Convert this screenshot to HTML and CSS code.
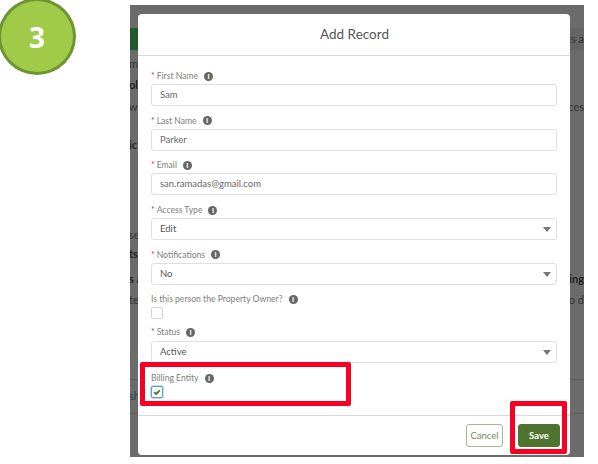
FILE: index.html
```html
<!DOCTYPE html>
<html lang="en">
<head>
<meta charset="utf-8">
<title>Add Record</title>
<link rel="stylesheet" href="styles.css">
</head>
<body>
<div class="badge">3</div>
<div class="backdrop">
  <div class="page">
    <div class="row banner"><span class="band"></span><span class="frag">ts a</span></div>
    <div class="row r-mu"><span class="frag lead">mu</span></div>
    <div class="row r-oll"><span class="frag lead bold">oll</span></div>
    <div class="row r-wh"><span class="frag lead">wh</span><span class="frag">cces</span></div>
    <div class="row r-ic"><span class="frag lead bold">ic</span></div>
    <div class="row r-se"><span class="frag lead">se</span></div>
    <div class="row r-ts"><span class="frag lead bold">ts</span></div>
    <div class="row r-sa"><span class="frag lead bold">s a</span><span class="frag bold">ing</span></div>
    <div class="row r-te"><span class="frag lead">te</span><span class="frag">o d</span></div>
    <div class="rule r-rule1"></div>
    <div class="row r-sh"><span class="frag lead link">sh</span></div>
    <div class="rule r-rule2"></div>
  </div>
  <section class="modal">
    <header class="modal-head">Add Record</header>
    <div class="modal-body">
      <div class="field">
        <div class="label"><span class="req">*</span>First Name<i class="info">i</i></div>
        <div class="input">Sam</div>
      </div>
      <div class="field">
        <div class="label"><span class="req">*</span>Last Name<i class="info">i</i></div>
        <div class="input">Parker</div>
      </div>
      <div class="field">
        <div class="label"><span class="req">*</span>Email<i class="info">i</i></div>
        <div class="input">san.ramadas@gmail.com</div>
      </div>
      <div class="field">
        <div class="label"><span class="req">*</span>Access Type<i class="info">i</i></div>
        <div class="input select">Edit<span class="caret"></span></div>
      </div>
      <div class="field">
        <div class="label"><span class="req">*</span>Notifications<i class="info">i</i></div>
        <div class="input select">No<span class="caret"></span></div>
      </div>
      <div class="field check-field">
        <div class="label">Is this person the Property Owner?<i class="info">i</i></div>
        <div class="checkbox"></div>
      </div>
      <div class="field status-field">
        <div class="label"><span class="req">*</span>Status<i class="info">i</i></div>
        <div class="input select">Active<span class="caret"></span></div>
      </div>
      <div class="field check-field billing-field">
        <div class="label">Billing Entity<i class="info">i</i></div>
        <div class="checkbox checked">
          <svg viewBox="0 0 10 10" width="10" height="10" aria-hidden="true"><path d="M2.2 5.2 L4.2 7 L7.8 3.4" fill="none" stroke="#4f7430" stroke-width="1.8"/></svg>
        </div>
      </div>
    </div>
    <footer class="modal-foot">
      <button class="btn cancel">Cancel</button>
      <button class="btn save">Save</button>
    </footer>
  </section>
</div>
<div class="callout callout-billing"></div>
<div class="callout callout-save"></div>
</body>
</html>
```
FILE: styles.css
```css
* { box-sizing: border-box; }
html, body { margin: 0; padding: 0; }
body {
  position: relative;
  width: 598px;
  height: 464px;
  overflow: hidden;
  background: #fff;
  font-family: "Lato", "Noto Sans", sans-serif;
}
.badge {
  position: absolute;
  left: -2px;
  top: -2px;
  width: 78px;
  height: 77px;
  border-radius: 50%;
  background: #a0cb49;
  border: 3px solid #6f9532;
  color: #fff;
  font: 700 28px/73px "Open Sans", sans-serif;
  text-align: center;
}
.backdrop {
  position: absolute;
  left: 130px;
  top: 5px;
  width: 454px;
  height: 452px;
  background: #6b6b6b;
  overflow: hidden;
}
.page {
  display: flex;
  flex-direction: column;
  padding-top: 23px;
  color: #333;
  font-size: 11px;
  line-height: 12px;
}
.row {
  display: flex;
  justify-content: space-between;
  height: 12px;
  overflow: hidden;
}
.banner {
  height: 22px;
  align-items: center;
  background: #656565;
}
.band {
  width: 8px;
  height: 22px;
  background: #215a2d;
}
.frag { display: block; white-space: nowrap; }
.lead { margin-left: -1px; }
.bold { font-weight: 700; color: #222; }
.link { color: #30404f; }
.rule { height: 1px; background: #5c5c5c; }
.r-mu { margin-top: 8px; }
.r-oll { margin-top: 9px; }
.r-wh { margin-top: 10px; }
.r-ic { margin-top: 26px; }
.r-se { margin-top: 78px; }
.r-ts { margin-top: 7px; }
.r-sa { margin-top: 13px; }
.r-te { margin-top: 9px; }
.r-rule1 { margin-top: 73px; }
.r-sh { margin-top: 10px; }
.r-rule2 { margin-top: 11px; }
.modal {
  position: absolute;
  left: 8px;
  top: 9px;
  width: 432px;
  height: 441px;
  display: flex;
  flex-direction: column;
  background: #fff;
  border-radius: 4px;
}
.modal-head {
  height: 42px;
  flex: none;
  border-bottom: 1px solid #d9d9d9;
  color: #555;
  font-size: 13.5px;
  line-height: 40px;
  text-align: center;
  padding-left: 1px;
}
.modal-body {
  flex: 1;
  padding: 14px 13px 0;
  display: flex;
  flex-direction: column;
}
.field { margin-bottom: 8.7px; }
.label {
  height: 12px;
  margin-bottom: 2px;
  display: flex;
  align-items: center;
  color: #808080;
  font-size: 8.6px;
  line-height: 12px;
  white-space: nowrap;
}
.req {
  color: #e0304a;
  margin-right: 2px;
}
.info {
  width: 9px;
  height: 9px;
  margin-left: 6px;
  border-radius: 50%;
  background: #666;
  color: #fff;
  font: 700 7px/9px "Open Sans", sans-serif;
  text-align: center;
}
.input {
  position: relative;
  height: 22px;
  padding-left: 8px;
  border: 1px solid #e0e0e0;
  border-radius: 3px;
  background: #fff;
  color: #666;
  font-size: 9.5px;
  line-height: 20px;
}
.select { color: #555; }
.caret {
  position: absolute;
  right: 5px;
  top: 8px;
  width: 0;
  height: 0;
  border-left: 4px solid transparent;
  border-right: 4px solid transparent;
  border-top: 5px solid #777;
}
.checkbox {
  width: 12px;
  height: 12px;
  border: 1px solid #d6d6d6;
  border-radius: 2px;
  background: #fff;
}
.checked {
  display: flex;
  align-items: center;
  justify-content: center;
  border-color: #5aa5d6;
  box-shadow: 0 0 0 1px #b9dcf0;
}
.check-field { margin-bottom: 7px; }
.status-field .label { margin-bottom: 3px; }
.billing-field .label { margin-top: 1px; }
.status-field { margin-bottom: 8px; }
.modal-foot {
  height: 40px;
  flex: none;
  display: flex;
  justify-content: flex-end;
  align-items: center;
  gap: 15px;
  padding-right: 10px;
  border-top: 1px solid #d9d9d9;
}
.btn {
  height: 23px;
  padding: 0;
  border-radius: 3px;
  font-family: inherit;
  font-size: 9.5px;
}
.cancel {
  width: 37px;
  background: #fff;
  border: 1px solid #a6ba90;
  color: #6f8a55;
}
.save {
  width: 42px;
  background: #4f7430;
  border: 1px solid #4f7430;
  color: #fff;
  font-weight: 700;
}
.callout {
  position: absolute;
  border: 5px solid #f80024;
  border-radius: 2px;
}
.callout-billing {
  left: 140px;
  top: 362px;
  width: 211px;
  height: 44px;
}
.callout-save {
  left: 510px;
  top: 401px;
  width: 57px;
  height: 53px;
}
```
